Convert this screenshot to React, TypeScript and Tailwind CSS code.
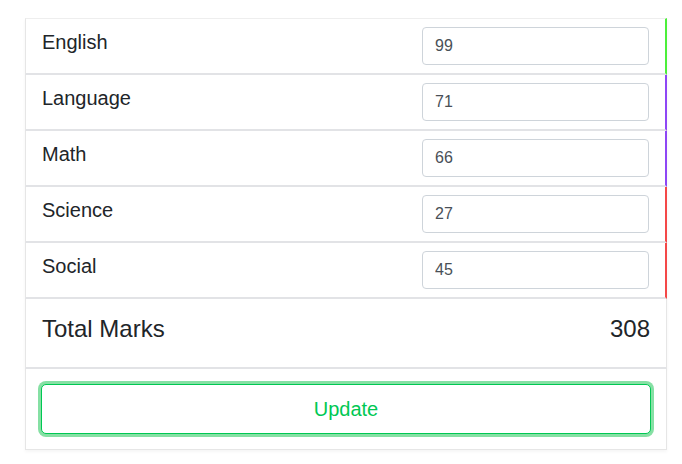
import { useState } from "react";

type Subject = { name: string; mark: number; bar: string };

const SUBJECTS: Subject[] = [
  { name: "English", mark: 99, bar: "border-r-[#4cef3a]" },
  { name: "Language", mark: 71, bar: "border-r-[#8e47f5]" },
  { name: "Math", mark: 66, bar: "border-r-[#8e47f5]" },
  { name: "Science", mark: 27, bar: "border-r-[#f44848]" },
  { name: "Social", mark: 45, bar: "border-r-[#f44848]" },
];

export default function App() {
  const [marks, setMarks] = useState(SUBJECTS.map((s) => String(s.mark)));
  const total = marks.reduce((a, m) => a + (parseInt(m) || 0), 0);

  return (
    <div
      className="min-h-[464px] w-[682px] bg-white pt-[18px] pl-[25px]"
      style={{ fontFamily: '"Liberation Sans", Arial, sans-serif' }}
    >
      <div className="flex w-[642px] flex-col">
        {/* ── Subject rows ── */}
        {SUBJECTS.map((s, i) => (
          <div
            key={s.name}
            className={`flex items-start justify-between border-l border-r-2 border-b-2 border-t-[#eeeeee] border-l-[#e6e6e6] border-b-[#e2e3e6] bg-white pl-[16px] pr-[16px] shadow-[0_2px_3px_rgba(0,0,0,0.05)] ${s.bar} ${i === 0 ? "h-[57px] border-t" : "h-[56px]"}`}
          >
            <span className="pt-[10px] text-[20px] leading-[26px] text-[#212529]">{s.name}</span>
            <input
              value={marks[i]}
              onChange={(e) => {
                const next = [...marks];
                next[i] = e.target.value;
                setMarks(next);
              }}
              className="mt-[8px] h-[38px] w-[227px] rounded-[4px] border border-[#ced4da] bg-white px-[12px] text-[16px] text-[#495057] outline-none"
            />
          </div>
        ))}

        {/* ── Total ── */}
        <div className="flex h-[70px] items-center justify-between border-l border-r border-b-2 border-l-[#e6e6e6] border-r-[#e6e6e6] border-b-[#e2e3e6] bg-white pl-[16px] pr-[16px] pb-[8px] shadow-[0_2px_3px_rgba(0,0,0,0.05)]">
          <span className="text-[24px] text-[#212529]">Total Marks</span>
          <span className="text-[24px] text-[#212529]">{total}</span>
        </div>

        {/* ── Update ── */}
        <div className="flex h-[81px] items-start border-l border-r border-b border-[#e6e6e6] bg-white px-[15px] pt-[15px] shadow-[0_2px_3px_rgba(0,0,0,0.04)]">
          <button className="h-[50px] w-full rounded-[5px] border border-[#00c853] bg-white text-[20px] text-[#00c853] ring-[3px] ring-[#86e0a4]">
            Update
          </button>
        </div>
      </div>
    </div>
  );
}
